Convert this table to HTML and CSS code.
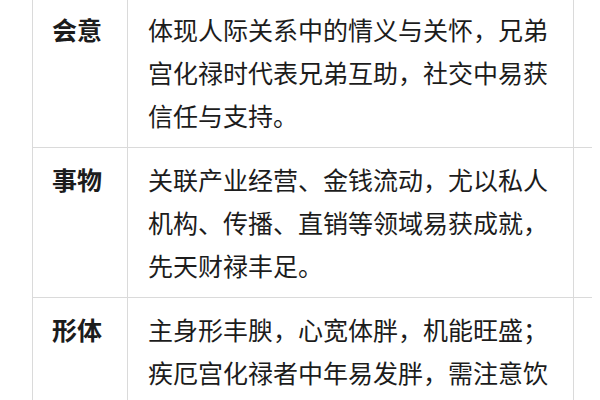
FILE: index.html
```html
<!DOCTYPE html>
<html lang="zh-CN">
<head>
<meta charset="utf-8">
<link rel="stylesheet" href="styles.css">
</head>
<body>
<div class="wrap">
  <table class="info">
    <colgroup>
      <col class="c-label">
      <col class="c-text">
      <col class="c-extra">
    </colgroup>
    <tbody>
      <tr>
        <th>会意</th>
        <td>体现人际关系中的情义与关怀，兄弟宫化禄时代表兄弟互助，社交中易获信任与支持。</td>
        <td class="extra"></td>
      </tr>
      <tr>
        <th>事物</th>
        <td>关联产业经营、金钱流动，尤以私人机构、传播、直销等领域易获成就，先天财禄丰足。</td>
        <td class="extra"></td>
      </tr>
      <tr>
        <th>形体</th>
        <td>主身形丰腴，心宽体胖，机能旺盛；疾厄宫化禄者中年易发胖，需注意饮食节制。</td>
        <td class="extra"></td>
      </tr>
    </tbody>
  </table>
</div>
</body>
</html>
```
FILE: styles.css
```css
html, body {
  margin: 0;
  padding: 0;
  background: #ffffff;
}
body {
  font-family: "Noto Sans CJK SC", "Noto Sans", sans-serif;
  color: #1c1c1c;
}
.wrap {
  margin-top: -3px;
  margin-left: 32px;
  width: 560px;
  overflow: hidden;
}
.info {
  border-collapse: collapse;
  table-layout: fixed;
  width: 700px;
}
.c-label { width: 95px; }
.c-text { width: 446px; }
.c-extra { width: 159px; }
.info th,
.info td {
  border: 1px solid #dadada;
  padding: 10px 20px 10px 20px;
  font-size: 25px;
  line-height: 43px;
  vertical-align: top;
  text-align: left;
}
.info th {
  font-weight: 700;
  padding-left: 19px;
}
.info td {
  font-weight: 400;
}
```
